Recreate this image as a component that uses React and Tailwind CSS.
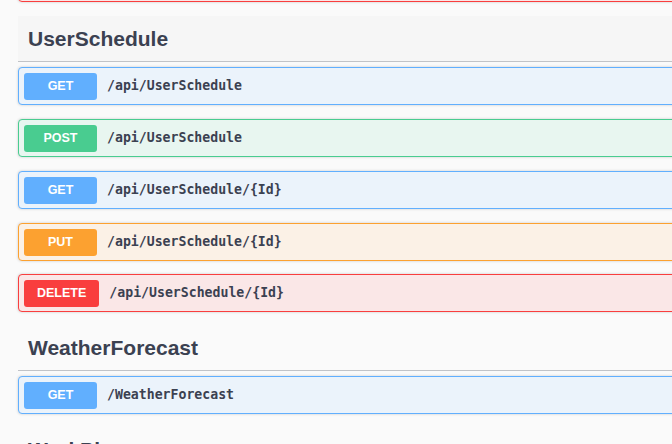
import React from "react";

const styles = {
  GET: { wrap: "border-[#61affe] bg-[#ebf3fb]", badge: "bg-[#61affe]" },
  POST: { wrap: "border-[#49cc90] bg-[#e8f6f0]", badge: "bg-[#49cc90]" },
  PUT: { wrap: "border-[#fca130] bg-[#fbf1e6]", badge: "bg-[#fca130]" },
  DELETE: { wrap: "border-[#f93e3e] bg-[#fae7e7]", badge: "bg-[#f93e3e]" },
};

function Op({ method, path, last }) {
  const s = styles[method];
  return (
    <div
      className={`${last ? "mb-[13px]" : "mb-[14px]"} flex h-[38px] items-center rounded-[4px] border pl-[5px] shadow-[0_0_3px_rgba(0,0,0,0.19)] ${s.wrap}`}
    >
      <span
        className={`flex h-[27px] min-w-[73px] items-center justify-center rounded-[3px] px-[13px] text-[12.5px] font-bold text-white ${s.badge}`}
        style={{ fontFamily: '"Liberation Sans", Arial, sans-serif' }}
      >
        {method}
      </span>
      <span
        className="ml-[10px] text-[13.2px] font-bold text-[#3b4151]"
        style={{ fontFamily: '"DejaVu Sans Mono", monospace' }}
      >
        {path}
      </span>
    </div>
  );
}

function Tag({ name, hover }) {
  return (
    <div
      className={`mb-[5px] flex h-[46px] items-center border-b border-[#c1c3c7] pl-[10px] ${hover ? "bg-[#f6f6f6]" : ""}`}
    >
      <h3
        className="text-[21px] font-bold leading-none text-[#3b4151]"
        style={{ fontFamily: '"Liberation Sans", Arial, sans-serif' }}
      >
        {name}
      </h3>
    </div>
  );
}

export default function App() {
  return (
    <div className="h-[444px] w-[672px] overflow-hidden bg-[#fafafa]">
      <div className="w-[700px] pl-[18px]">
        <div className="-mt-[36px] mb-[14px] h-[38px] rounded-[4px] border border-[#f93e3e] bg-[#fae7e7] shadow-[0_0_3px_rgba(0,0,0,0.19)]" />
        <Tag name="UserSchedule" hover />
        <Op method="GET" path="/api/UserSchedule" />
        <Op method="POST" path="/api/UserSchedule" />
        <Op method="GET" path="/api/UserSchedule/{Id}" />
        <Op method="PUT" path="/api/UserSchedule/{Id}" last />
        <Op method="DELETE" path="/api/UserSchedule/{Id}" last />
        <Tag name="WeatherForecast" />
        <Op method="GET" path="/WeatherForecast" last />
        <Tag name="WorkPlace" />
      </div>
    </div>
  );
}
